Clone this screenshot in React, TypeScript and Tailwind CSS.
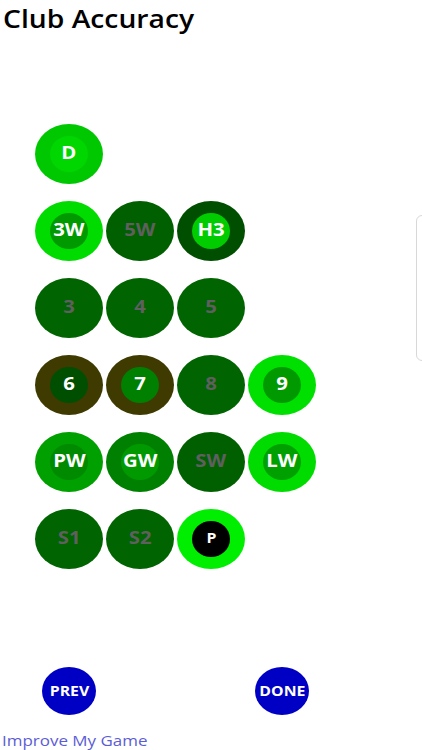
import React from "react";

type Club = {
  label: string;
  outer: string;
  inner?: string;
  text: string;
  small?: boolean;
};

// colours read off the screenshot
const rows: Club[][] = [
  [{ label: "D", outer: "bg-[#00c800]", inner: "bg-[#00d600]", text: "text-white" }],
  [
    { label: "3W", outer: "bg-[#00dc00]", inner: "bg-[#009a00]", text: "text-white" },
    { label: "5W", outer: "bg-[#006000]", text: "text-[#5f5f5f]" },
    { label: "H3", outer: "bg-[#004f00]", inner: "bg-[#00cc00]", text: "text-white" },
  ],
  [
    { label: "3", outer: "bg-[#006400]", text: "text-[#5f5f5f]" },
    { label: "4", outer: "bg-[#006400]", text: "text-[#5f5f5f]" },
    { label: "5", outer: "bg-[#006400]", text: "text-[#5f5f5f]" },
  ],
  [
    { label: "6", outer: "bg-[#3e3a00]", inner: "bg-[#004f00]", text: "text-white" },
    { label: "7", outer: "bg-[#3e3a00]", inner: "bg-[#008000]", text: "text-white" },
    { label: "8", outer: "bg-[#006400]", text: "text-[#5f5f5f]" },
    { label: "9", outer: "bg-[#00e000]", inner: "bg-[#009a00]", text: "text-white" },
  ],
  [
    { label: "PW", outer: "bg-[#00a000]", inner: "bg-[#008a00]", text: "text-white" },
    { label: "GW", outer: "bg-[#008000]", inner: "bg-[#009a00]", text: "text-white" },
    { label: "SW", outer: "bg-[#006000]", text: "text-[#5f5f5f]" },
    { label: "LW", outer: "bg-[#00dc00]", inner: "bg-[#00a000]", text: "text-white" },
  ],
  [
    { label: "S1", outer: "bg-[#006400]", text: "text-[#5f5f5f]" },
    { label: "S2", outer: "bg-[#006400]", text: "text-[#5f5f5f]" },
    { label: "P", outer: "bg-[#00ee00]", inner: "bg-black", text: "text-white", small: true },
  ],
];

const ClubBubble = ({ club }: { club: Club }) => (
  <div className={`relative flex h-[60px] w-[68px] items-center justify-center rounded-[50%] ${club.outer}`}>
    {club.inner && (
      <div className={`absolute h-[36px] w-[38px] rounded-[50%] ${club.inner}`} />
    )}
    <span className={`relative -mt-[4px] inline-block scale-x-[1.13] font-bold ${club.small ? "text-[14px]" : "text-[18px]"} ${club.text}`}>
      {club.label}
    </span>
  </div>
);

export default function App() {
  return (
    <div
      className="relative h-[750px] w-[422px] overflow-hidden bg-white"
      style={{ fontFamily: '"Open Sans", "Noto Sans", sans-serif' }}
    >
      <h1 className="pl-[3px] pt-px text-[25px] font-semibold leading-[34px] text-black">
        <span className="inline-block origin-left scale-x-[1.13]">Club Accuracy</span>
      </h1>

      {/* club grid */}
      <div className="ml-[35px] mt-[89px] flex flex-col gap-[17px]">
        {rows.map((row, i) => (
          <div key={i} className="flex gap-[3px]">
            {row.map((c) => (
              <ClubBubble key={c.label} club={c} />
            ))}
          </div>
        ))}
      </div>

      {/* prev / done */}
      <div className="ml-[42px] mt-[98px] flex gap-[159px]">
        <button className="flex h-[48px] w-[54px] items-center justify-center rounded-[50%] bg-[#0000c4] text-[14px] font-bold text-white">
          <span className="-mt-[2px] inline-block scale-x-[1.13]">PREV</span>
        </button>
        <button className="flex h-[48px] w-[54px] items-center justify-center rounded-[50%] bg-[#0000c4] text-[14px] font-bold text-white">
          <span className="-mt-[2px] inline-block scale-x-[1.13]">DONE</span>
        </button>
      </div>

      <div className="mt-[15px] pl-[2px] text-[15px] leading-[20px] text-[#5c5cd6]">
        <span className="inline-block origin-left scale-x-[1.13]">Improve My Game</span>
      </div>

      {/* side drawer handle */}
      <div className="absolute left-[416px] top-[215px] h-[146px] w-[20px] rounded-l-[6px] border border-[#d8d8d8]" />
    </div>
  );
}
